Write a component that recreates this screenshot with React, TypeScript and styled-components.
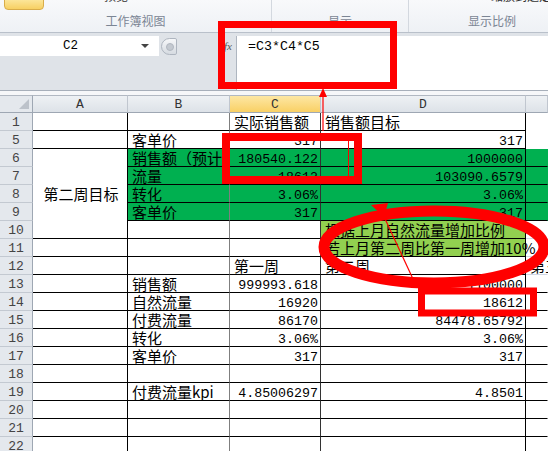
import React from "react";
import styled, { createGlobalStyle, css } from "styled-components";

const GlobalStyle = createGlobalStyle`
  html, body {
    margin: 0;
    padding: 0;
    background: #fff;
    overflow: hidden;
  }
  body {
    font-family: "Noto Sans CJK SC", "Liberation Sans", sans-serif;
  }
  * {
    box-sizing: border-box;
  }
`;

const Page = styled.div`
  position: relative;
  width: 548px;
  height: 451px;
  overflow: hidden;
  background: #fff;
`;

/* ---------- ribbon ---------- */

const Ribbon = styled.div`
  display: flex;
  height: 33px;
  overflow: hidden;
  background: linear-gradient(#f8f9fb, #eef1f5);
  border-bottom: 1px solid #b9c0ca;
`;

const Group = styled.div<{ $w: number }>`
  flex: 0 0 ${(p) => p.$w}px;
  display: flex;
  flex-direction: column;
  border-right: 1px solid #d3d8df;
`;

const GroupTop = styled.div<{ $pad: number }>`
  height: 12px;
  display: flex;
  align-items: flex-start;
  gap: 60px;
  padding-left: ${(p) => p.$pad}px;
  overflow: hidden;
`;

const BigIcon = styled.div`
  width: 40px;
  height: 17px;
  margin-top: -7px;
  border: 1px solid #d9ad4a;
  border-radius: 4px;
  background: linear-gradient(#fff4bd, #f7d063);
`;

const CutText = styled.span`
  margin-top: -11px;
  font-size: 12px;
  line-height: 14px;
  color: #333;
  white-space: nowrap;
`;

const GroupLabel = styled.div`
  height: 18px;
  line-height: 18px;
  text-align: center;
  font-size: 12px;
  color: #7b8594;
  white-space: nowrap;
`;

/* ---------- formula bar ---------- */

const FormulaBar = styled.div`
  display: flex;
  height: 58px;
  padding-top: 3px;
  background: #dfe3e8;
  border-bottom: 1px solid #a7afba;
`;

const LeftPane = styled.div`
  flex: 0 0 236px;
  display: flex;
  flex-direction: column;
`;

const NameRow = styled.div`
  display: flex;
  align-items: center;
  height: 20px;
`;

const NameBox = styled.div`
  flex: 0 0 159px;
  height: 20px;
  display: flex;
  align-items: center;
  background: #fff;
  font: 12.5px "Liberation Mono", monospace;
  color: #000;
`;

const NameText = styled.span`
  flex: 0 0 141px;
  text-align: center;
`;

const DropArrow = styled.span`
  width: 0;
  height: 0;
  border-left: 4px solid transparent;
  border-right: 4px solid transparent;
  border-top: 4px solid #444;
`;

const RoundButton = styled.div`
  position: relative;
  width: 16px;
  height: 17px;
  margin-left: 2px;
  border: 1px solid #aeb5bf;
  border-radius: 9px 2px 2px 9px;
  background: linear-gradient(#f6f7f9, #d6dbe1);
  &::after {
    content: "";
    position: absolute;
    left: 4px;
    top: 4px;
    width: 6px;
    height: 6px;
    border-radius: 50%;
    background: #c4c9d0;
    border: 1px solid #b1b7c0;
  }
`;

const FxLabel = styled.i`
  margin-left: auto;
  padding-right: 4px;
  font: italic 11px "Liberation Serif", serif;
  color: #555;
`;

const FormulaInput = styled.div`
  flex: 1;
  background: #fff;
  border-left: 1px solid #aeb6c0;
  padding: 2px 0 0 11px;
  font: 13.3px "Liberation Mono", monospace;
  line-height: 18px;
  color: #000;
`;

const Spacer = styled.div`
  height: 4px;
  background: #f6f7f9;
`;

/* ---------- sheet ---------- */

const Sheet = styled.div`
  display: grid;
  grid-template-columns: 33px 95px 102px 91px 205px 22px;
  grid-auto-rows: 18px;
`;

const Corner = styled.div`
  position: relative;
  background: #e4e8ed;
  border-top: 1px solid #b1b8c2;
  border-right: 1px solid #9ea7b3;
  border-bottom: 1px solid #9ea7b3;
  &::after {
    content: "";
    position: absolute;
    right: 3px;
    bottom: 3px;
    border-left: 10px solid transparent;
    border-bottom: 10px solid #bcc2ca;
  }
`;

const ColHead = styled.div<{ $active?: boolean }>`
  display: flex;
  align-items: center;
  justify-content: center;
  border-top: 1px solid #b1b8c2;
  border-right: 1px solid #c0c6cf;
  border-bottom: 1px solid #9ea7b3;
  background: ${(p) =>
    p.$active ? "linear-gradient(#fde7a4, #f9d065)" : "linear-gradient(#eef1f4, #dde2e8)"};
  font: 13px "Liberation Mono", monospace;
  color: #333;
`;

const RowHead = styled.div`
  display: flex;
  align-items: center;
  justify-content: center;
  padding-top: 1px;
  background: #e4e8ed;
  border-right: 1px solid #9ea7b3;
  border-bottom: 1px solid #c3c9d1;
  font: 13px "Liberation Mono", monospace;
  color: #444;
`;

type Fill = "green" | "lime";

const Cell = styled.div<{
  $fill?: Fill;
  $num?: boolean;
  $center?: boolean;
  $clip?: boolean;
  $right: string;
  $bottom: string;
  $span?: number;
}>`
  display: flex;
  align-items: ${(p) => (p.$num ? "flex-end" : "center")};
  justify-content: ${(p) => (p.$center ? "center" : p.$num ? "flex-end" : "flex-start")};
  padding: ${(p) => (p.$num ? "0 2px 0 4px" : "1px 2px 0 4px")};
  white-space: nowrap;
  overflow: ${(p) => (p.$clip ? "hidden" : "visible")};
  background: ${(p) =>
    p.$fill === "green" ? "#00b050" : p.$fill === "lime" ? "#92d050" : "transparent"};
  border-right: 1px solid ${(p) => p.$right};
  border-bottom: 1px solid ${(p) => p.$bottom};
  color: #000;
  font-family: ${(p) =>
    p.$num ? `"Liberation Mono", monospace` : `"Noto Sans CJK SC", "Liberation Sans", sans-serif`};
  font-size: ${(p) => (p.$num ? "13.3px" : "15px")};
  line-height: ${(p) => (p.$num ? "13px" : "16px")};
  ${(p) =>
    p.$span &&
    css`
      grid-row: span ${p.$span};
    `}
`;

/* ---------- red marks ---------- */

const Marks = styled.svg`
  position: absolute;
  left: 0;
  top: 0;
  width: 548px;
  height: 451px;
  pointer-events: none;
`;

/* ---------- data ---------- */

const cols = ["A", "B", "C", "D", "E"] as const;
type Col = (typeof cols)[number];

type CellSpec = { t?: string; num?: boolean; fill?: Fill; span?: number; center?: boolean };
type RowSpec = { n: number; cells: Partial<Record<Col, CellSpec | null>> };

const G: Fill = "green";

const rows: RowSpec[] = [
  { n: 1, cells: { C: { t: "实际销售额" }, D: { t: "销售额目标" } } },
  { n: 5, cells: { B: { t: "客单价" }, C: { t: "317", num: true }, D: { t: "317", num: true } } },
  {
    n: 6,
    cells: {
      A: { t: "第二周目标", span: 5, center: true },
      B: { t: "销售额（预计）", fill: G },
      C: { t: "180540.122", num: true, fill: G },
      D: { t: "1000000", num: true, fill: G },
      E: { fill: G },
    },
  },
  {
    n: 7,
    cells: {
      A: null,
      B: { t: "流量", fill: G },
      C: { t: "18612", num: true, fill: G },
      D: { t: "103090.6579", num: true, fill: G },
      E: { fill: G },
    },
  },
  {
    n: 8,
    cells: {
      A: null,
      B: { t: "转化", fill: G },
      C: { t: "3.06%", num: true, fill: G },
      D: { t: "3.06%", num: true, fill: G },
      E: { fill: G },
    },
  },
  {
    n: 9,
    cells: {
      A: null,
      B: { t: "客单价", fill: G },
      C: { t: "317", num: true, fill: G },
      D: { t: "317", num: true, fill: G },
      E: { fill: G },
    },
  },
  { n: 10, cells: { A: null, D: { t: "根据上月自然流量增加比例", fill: "lime" } } },
  { n: 11, cells: { D: { t: "若上月第二周比第一周增加10%", fill: "lime" } } },
  { n: 12, cells: { C: { t: "第一周" }, D: { t: "第二周" }, E: { t: "第三周" } } },
  { n: 13, cells: { B: { t: "销售额" }, C: { t: "999993.618", num: true }, D: { t: "1100000", num: true } } },
  { n: 14, cells: { B: { t: "自然流量" }, C: { t: "16920", num: true }, D: { t: "18612", num: true } } },
  { n: 15, cells: { B: { t: "付费流量" }, C: { t: "86170", num: true }, D: { t: "84478.65792", num: true } } },
  { n: 16, cells: { B: { t: "转化" }, C: { t: "3.06%", num: true }, D: { t: "3.06%", num: true } } },
  { n: 17, cells: { B: { t: "客单价" }, C: { t: "317", num: true }, D: { t: "317", num: true } } },
  { n: 18, cells: {} },
  { n: 19, cells: { B: { t: "付费流量kpi" }, C: { t: "4.85006297", num: true }, D: { t: "4.8501", num: true } } },
  { n: 20, cells: {} },
  { n: 21, cells: {} },
  { n: 22, cells: {} },
];

const rightColor: Record<Col, string> = {
  A: "#000",
  B: "#7f7f7f",
  C: "#333",
  D: "#000",
  E: "transparent",
};

function bottomColor(col: Col, n: number, spec?: CellSpec | null) {
  if (col !== "E") return "#000";
  if (spec?.fill || n >= 13) return "#000";
  if (n === 1 || n === 5) return "transparent";
  return "#d0d7e5";
}

export default function App() {
  return (
    <Page>
      <GlobalStyle />
      <Ribbon>
        <Group $w={272}>
          <GroupTop $pad={4}>
            <BigIcon />
            <CutText>预览</CutText>
          </GroupTop>
          <GroupLabel>工作簿视图</GroupLabel>
        </Group>
        <Group $w={137}>
          <GroupTop $pad={10} />
          <GroupLabel>显示</GroupLabel>
        </Group>
        <Group $w={160}>
          <GroupTop $pad={82}>
            <CutText>缩放到选定区域</CutText>
          </GroupTop>
          <GroupLabel>显示比例</GroupLabel>
        </Group>
      </Ribbon>

      <FormulaBar>
        <LeftPane>
          <NameRow>
            <NameBox>
              <NameText>C2</NameText>
              <DropArrow />
            </NameBox>
            <RoundButton />
            <FxLabel>fx</FxLabel>
          </NameRow>
        </LeftPane>
        <FormulaInput>=C3*C4*C5</FormulaInput>
      </FormulaBar>
      <Spacer />

      <Sheet>
        <Corner />
        {cols.map((c) => (
          <ColHead key={c} $active={c === "C"}>
            {c === "E" ? "" : c}
          </ColHead>
        ))}
        {rows.map((r) => (
          <React.Fragment key={r.n}>
            <RowHead>{r.n}</RowHead>
            {cols.map((c) => {
              const spec = r.cells[c];
              if (spec === null) return null;
              return (
                <Cell
                  key={c}
                  $fill={spec?.fill}
                  $num={spec?.num}
                  $center={spec?.center}
                  $clip={c === "B"}
                  $span={spec?.span}
                  $right={rightColor[c]}
                  $bottom={bottomColor(c, r.n, spec)}
                >
                  {spec?.t}
                </Cell>
              );
            })}
          </React.Fragment>
        ))}
      </Sheet>

      <Marks viewBox="0 0 548 451">
        {/* box around formula */}
        <rect x="221.5" y="24.5" width="172" height="61" fill="none" stroke="#ff0000" strokeWidth="7" />
        {/* arrow up to formula */}
        <line x1="323" y1="131" x2="323" y2="95" stroke="#ff0000" strokeWidth="1.2" />
        <polygon points="319,97 327,97 323,88" fill="#ff0000" />
        {/* box around C6 */}
        <rect x="226" y="137" width="132" height="43" fill="none" stroke="#ff0000" strokeWidth="8" />
        <line x1="348.5" y1="140" x2="348.5" y2="176" stroke="#ff0000" strokeWidth="1" />
        {/* ellipse */}
        <ellipse cx="434" cy="247" rx="110" ry="36" fill="none" stroke="#ff0000" strokeWidth="11" />
        <polygon points="371,205 388,203 384,217" fill="#ff0000" />
        <line x1="380" y1="208" x2="413" y2="279" stroke="#ff0000" strokeWidth="1.2" />
        {/* box around D14 */}
        <rect x="421.5" y="291" width="112" height="22" fill="none" stroke="#ff0000" strokeWidth="7" />
      </Marks>
    </Page>
  );
}
